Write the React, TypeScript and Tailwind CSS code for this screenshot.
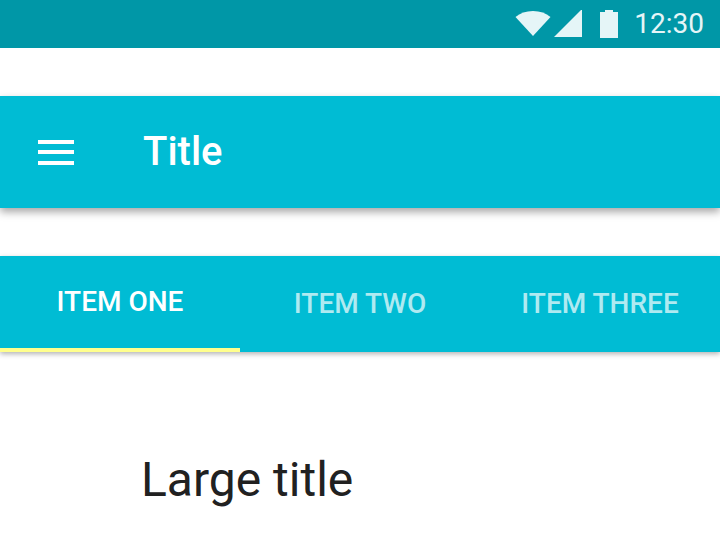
export default function App() {
  return (
    <div className="w-[720px] h-[560px] bg-white overflow-hidden font-['Roboto',sans-serif]">
      <div className="h-12 bg-[#0097a7] flex items-center justify-end pr-4 text-white/90">
        <svg width="36" height="28" viewBox="0 0 36 28" className="ml-0">
          <path d="M18 26 L0.5 7 C5 3 11 1 18 1 C25 1 31 3 35.5 7 Z" fill="#e5f5f7" />
        </svg>
        <svg width="28" height="28" viewBox="0 0 28 28" className="ml-[3px]">
          <path d="M0 28 L28 0 V28 Z" fill="#e5f5f7" transform="translate(0,-1)" />
        </svg>
        <svg width="18" height="28" viewBox="0 0 18 28" className="ml-[18px]">
          <path d="M0 2 H5 V0 H13 V2 H18 V28 H0 Z" fill="#e5f5f7" />
        </svg>
        <span className="ml-[16px] text-[28px] leading-[48px] text-[#e5f5f7]">12:30</span>
      </div>
      <div className="mt-12 h-28 bg-[#00bcd4] flex items-center shadow-[0_4px_8px_rgba(0,0,0,0.35)]">
        <div className="ml-[38px] w-9 h-[25px] flex flex-col justify-between">
          <div className="h-[4px] bg-white" />
          <div className="h-[4px] bg-white" />
          <div className="h-[4px] bg-white" />
        </div>
        <span className="ml-[69px] text-[40px] font-medium text-white">Title</span>
      </div>
      <div className="mt-12 h-24 bg-[#00bcd4] flex shadow-[0_2px_5px_rgba(0,0,0,0.3)] text-[28px] font-medium">
        <div className="w-60 h-full flex items-center justify-center border-b-4 border-[#ffff8d] text-white">ITEM ONE</div>
        <div className="w-60 h-full flex items-center justify-center text-white/70">ITEM TWO</div>
        <div className="w-60 h-full flex items-center justify-center text-white/70">ITEM THREE</div>
      </div>
      <div className="mt-[92px] ml-[141px] text-[48px] leading-[72px] text-[#212121]">Large title</div>
    </div>
  );
}
